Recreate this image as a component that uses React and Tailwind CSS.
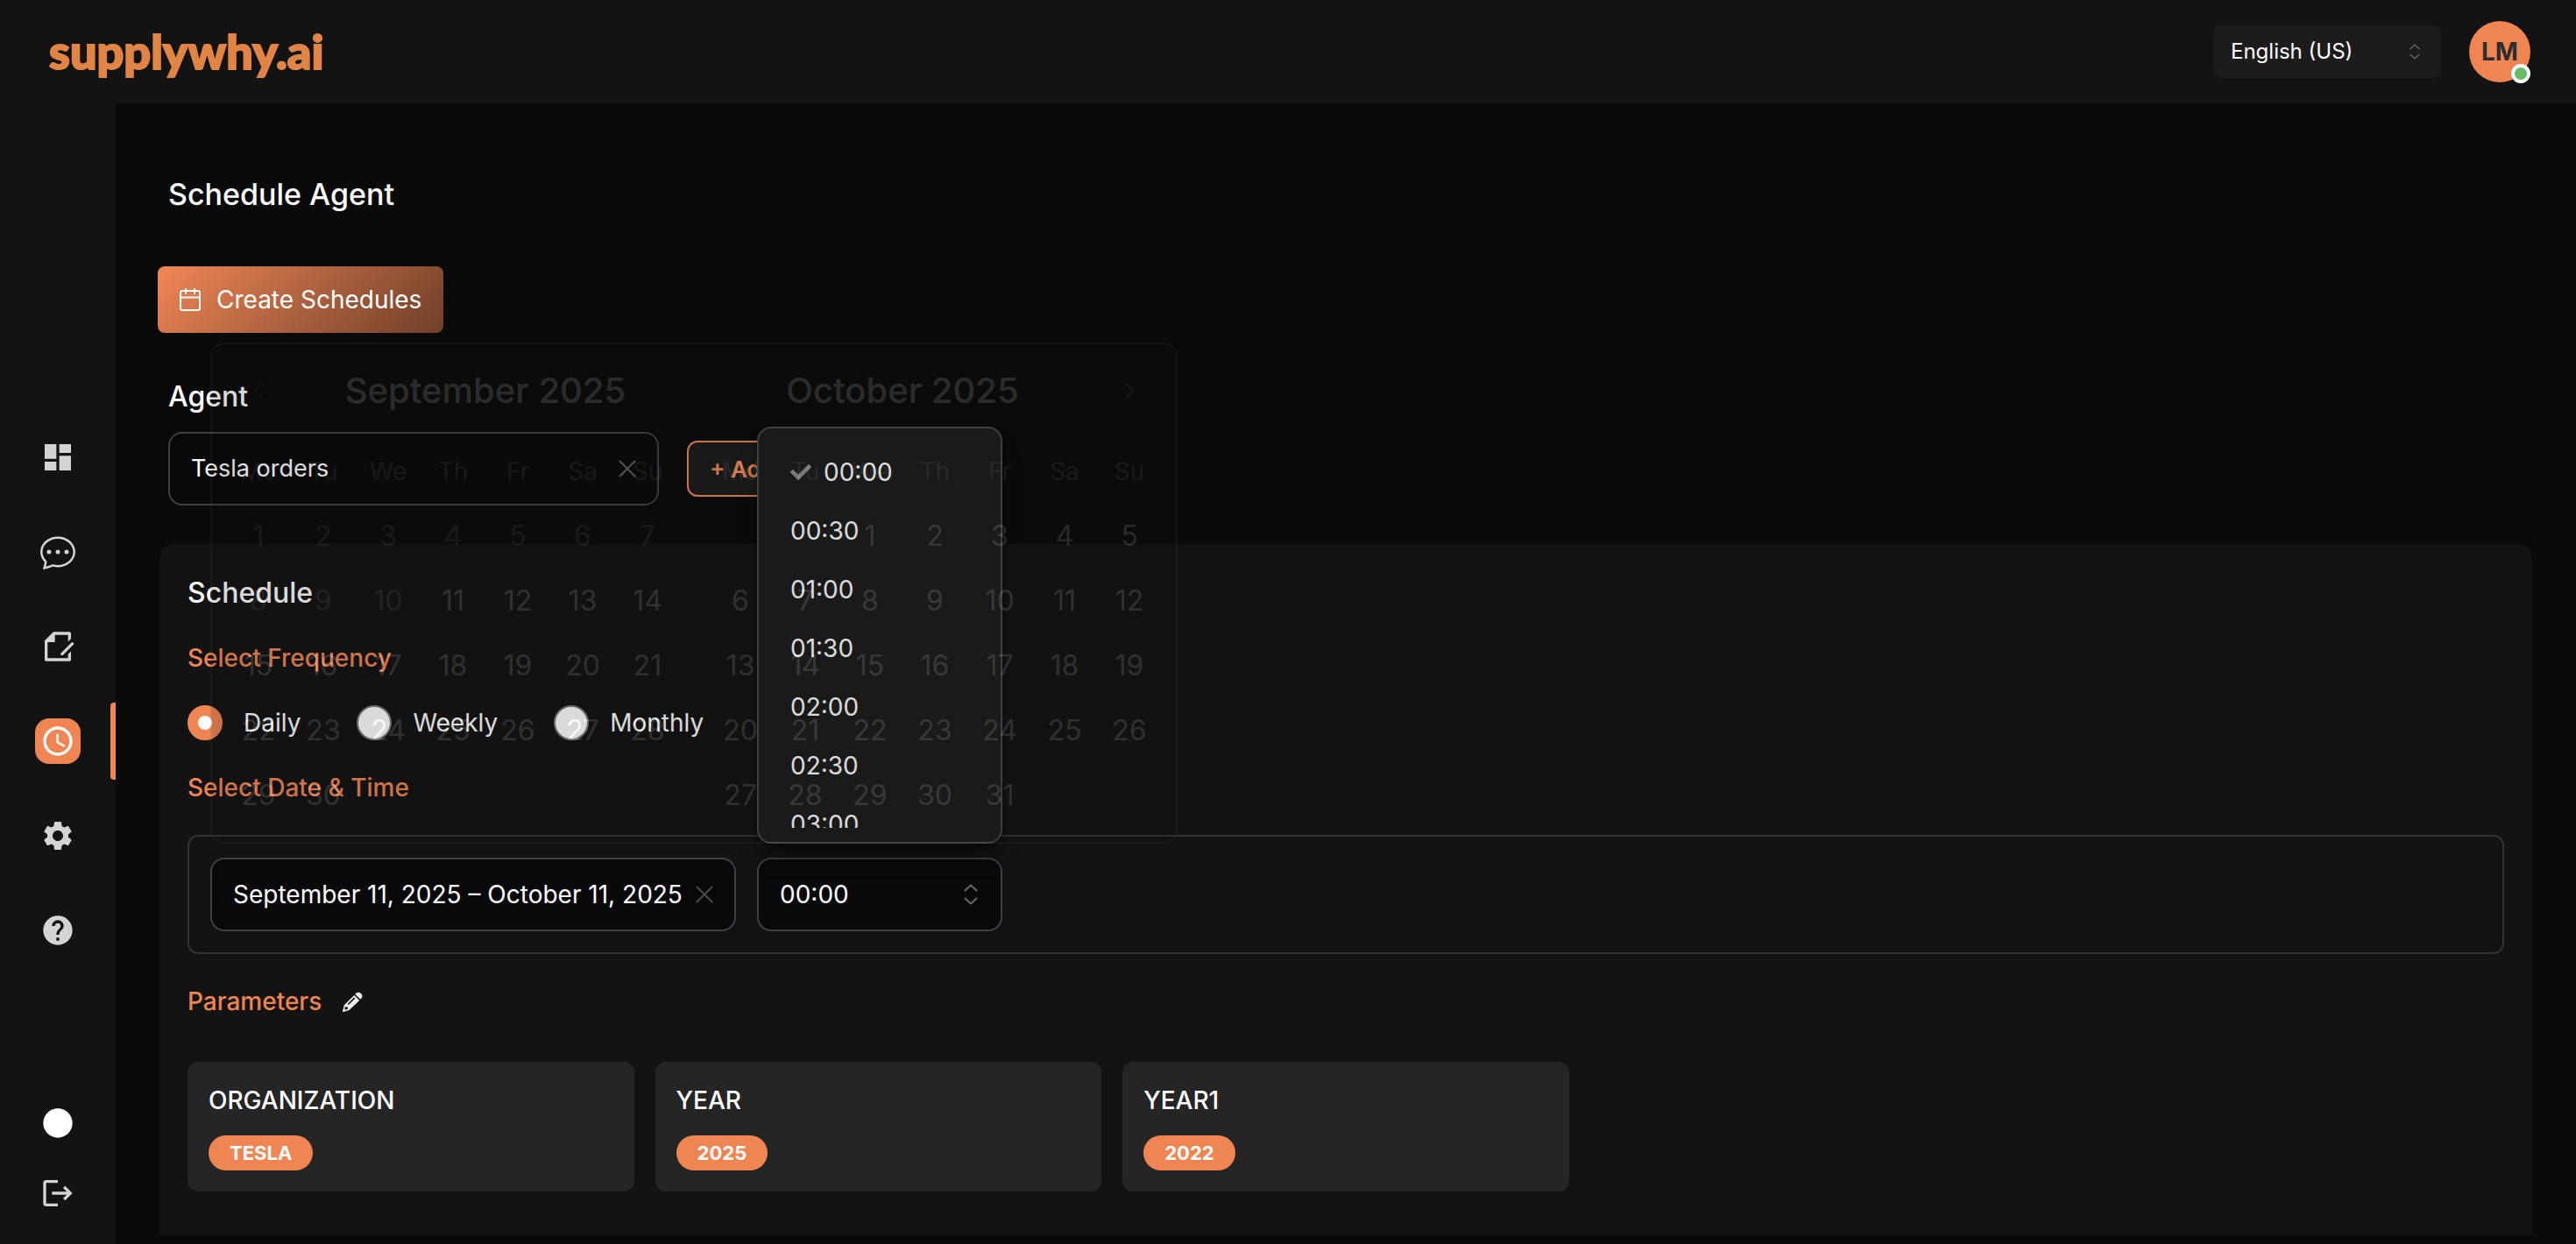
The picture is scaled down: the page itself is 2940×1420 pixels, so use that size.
import { useState } from "react";
import {
  MdDashboard,
  MdAccessTime,
  MdSettings,
  MdHelp,
  MdCircle,
  MdLogout,
} from "react-icons/md";
import { BsChatDots } from "react-icons/bs";
import { RiFileEditLine } from "react-icons/ri";
import { FaCheck } from "react-icons/fa";

const navItems = [
  { label: "Dashboard", Icon: MdDashboard },
  { label: "Chat", Icon: BsChatDots },
  { label: "Documents", Icon: RiFileEditLine },
  { label: "Schedule", Icon: MdAccessTime, active: true },
  { label: "Settings", Icon: MdSettings },
  { label: "Help", Icon: MdHelp },
];

const footerItems = [
  { label: "Theme", Icon: MdCircle, color: "text-white" },
  { label: "Log out", Icon: MdLogout, color: "text-[#d4d4d4]" },
];

const times = ["00:00", "00:30", "01:00", "01:30", "02:00", "02:30", "03:00"];
const weekdays = ["Mo", "Tu", "We", "Th", "Fr", "Sa", "Su"];
const frequencies = ["Daily", "Weekly", "Monthly"];
const parameters = [
  { name: "ORGANIZATION", value: "TESLA" },
  { name: "YEAR", value: "2025" },
  { name: "YEAR1", value: "2022" },
];

function buildWeeks(offset, days) {
  const cells = [
    ...Array(offset).fill(null),
    ...Array.from({ length: days }, (_, i) => i + 1),
  ];
  while (cells.length % 7) cells.push(null);
  const weeks = [];
  for (let i = 0; i < cells.length; i += 7) weeks.push(cells.slice(i, i + 7));
  return weeks;
}

function CrossIcon() {
  return (
    <svg viewBox="0 0 20 20" className="h-5 w-5" fill="none" stroke="currentColor" strokeWidth="2" strokeLinecap="round">
      <path d="M1.5 1.5l17 17M18.5 1.5l-17 17" />
    </svg>
  );
}

function UpDownIcon({ className }) {
  return (
    <svg viewBox="0 0 16 24" className={className} fill="none" stroke="currentColor" strokeWidth="2" strokeLinecap="round" strokeLinejoin="round">
      <path d="M1.5 7.5L8 1.5l6.5 6M1.5 16.5l6.5 6 6.5-6" />
    </svg>
  );
}

function CalendarIcon() {
  return (
    <svg viewBox="0 0 24 26" className="h-[26px] w-6" fill="none" stroke="currentColor" strokeWidth="2" strokeLinecap="round" strokeLinejoin="round">
      <rect x="1" y="3" width="22" height="22" rx="2" />
      <path d="M1 10.5h22M7 1v5M17 1v5" />
    </svg>
  );
}

function PencilIcon() {
  return (
    <svg viewBox="0 0 24 24" className="h-6 w-6" fill="currentColor">
      <path d="M15.8 2.3a4.400 4.400 0 0 1 6 5.900l-1.600 1.500l-5.800-5.800z" />
      <path fillRule="evenodd" d="M13.300 5l5.900 5.900L7.600 22L1 24a.8.8 0 0 1-1-1L1.800 16.300zM14.300 8.700l-1.200-1.200l-7.400 7.400l1.200 1.200zM2.700 18.500l-.4 2.200l1.700 1.100l2.300-1.500l-.9-2z" />
    </svg>
  );
}

function MonthArrow({ label, path, color }) {
  return (
    <button type="button" aria-label={label} className={`flex h-[74px] w-[74px] items-center justify-center ${color}`}>
      <svg viewBox="0 0 12 20" className="h-5 w-3" fill="none" stroke="currentColor" strokeWidth="2" strokeLinecap="round">
        <path d={path} />
      </svg>
    </button>
  );
}

function Month({ title, offset, days, firstAvailable, before, after }) {
  return (
    <section className="w-[518px]">
      <div className="flex h-[74px] items-center">
        {before}
        <h3 className="flex-1 text-center text-[40px] font-medium leading-[70px] text-[#e4e4e7]">{title}</h3>
        {after}
      </div>
      <table className="mt-[18px] w-full table-fixed border-collapse">
        <thead>
          <tr>
            {weekdays.map((d) => (
              <th key={d} scope="col" className="h-[74px] p-0 text-center text-[28px] font-normal text-[#71717a]">
                {d}
              </th>
            ))}
          </tr>
        </thead>
        <tbody>
          {buildWeeks(offset, days).map((week, i) => (
            <tr key={i}>
              {week.map((day, j) => (
                <td key={j} className="h-[74px] p-0 text-center">
                  {day && (
                    <button
                      type="button"
                      disabled={day < firstAvailable}
                      className="h-[74px] w-full text-[32px] text-[#d4d4d8] disabled:text-[#71717a]"
                    >
                      {day}
                    </button>
                  )}
                </td>
              ))}
            </tr>
          ))}
        </tbody>
      </table>
    </section>
  );
}

function CalendarPopover() {
  return (
    <div className="absolute bottom-full left-0 z-20 mb-4 w-max rounded-2xl border-2 border-[#52525b] bg-[#121212] p-4 opacity-15">
      <div className="flex gap-8">
        <Month
          title="September 2025"
          offset={0}
          days={30}
          firstAvailable={11}
          before={<MonthArrow label="Previous month" path="M10.5 1l-9 9 9 9" color="text-[#3f3f46]" />}
        />
        <Month
          title="October 2025"
          offset={2}
          days={31}
          firstAvailable={1}
          after={<MonthArrow label="Next month" path="M1.5 1l9 9-9 9" color="text-[#71717a]" />}
        />
      </div>
    </div>
  );
}

function TimeMenu({ value, onSelect }) {
  return (
    <div className="absolute bottom-full left-0 z-10 mb-4 w-full rounded-2xl border-2 border-[#46464d] bg-[#1c1c1c] py-4 shadow-xl shadow-black/40">
      <ul role="listbox" aria-label="Time" className="h-[440px] overflow-hidden">
        {times.map((t) => (
          <li
            key={t}
            role="option"
            aria-selected={t === value}
            onClick={() => onSelect(t)}
            className="flex h-[67px] cursor-pointer items-center gap-3.5 px-9 text-[28px] text-white"
          >
            {t === value && <FaCheck className="h-6 w-6 text-[#8a8a8a]" />}
            {t}
          </li>
        ))}
      </ul>
    </div>
  );
}

export default function App() {
  const [time, setTime] = useState("00:00");
  const [frequency, setFrequency] = useState("Daily");

  return (
    <div className="flex min-h-screen flex-col bg-[#0a0a0a] font-[Inter,sans-serif] text-white">
      <header className="flex h-[118px] items-center justify-between bg-[#131313] pl-14 pr-[52px]">
        <a href="#" className="font-[Lato,sans-serif] text-[54px] font-black leading-none text-[#e08545] [-webkit-text-stroke:2px_#e08545]">
          supplywhy.ai
        </a>
        <div className="flex items-center gap-8">
          <div className="relative">
            <select aria-label="Language" className="h-[60px] w-[260px] appearance-none rounded-lg bg-[#1c1c1c] px-5 text-2xl text-white">
              <option>English (US)</option>
            </select>
            <UpDownIcon className="pointer-events-none absolute right-6 top-5 h-5 w-3 text-[#5c5c5c]" />
          </div>
          <button type="button" aria-label="Account" className="relative flex h-[70px] w-[70px] items-center justify-center rounded-full bg-[#ef8553] text-[28px] font-bold text-[#2d2d2d]">
            LM
            <span className="absolute -bottom-px right-0 h-[22px] w-[22px] rounded-full border-4 border-white bg-[#66bb66]" />
          </button>
        </div>
      </header>

      <div className="flex flex-1">
        <aside className="flex w-[132px] shrink-0 flex-col justify-between bg-[#131313] pb-[18px] pt-[350px]">
          <nav aria-label="Main" className="flex flex-col">
            {navItems.map(({ label, Icon, active }) => (
              <a
                key={label}
                href="#"
                aria-label={label}
                aria-current={active ? "page" : undefined}
                className="relative flex h-[108px] items-center justify-center"
              >
                {active ? (
                  <>
                    <span className="flex h-[52px] w-[52px] items-center justify-center rounded-2xl bg-[#ef8553]">
                      <Icon className="h-10 w-10 text-white" />
                    </span>
                    <span className="absolute right-0 h-[88px] w-1.5 rounded-l bg-[#ef8553]" />
                  </>
                ) : (
                  <Icon className="h-10 w-10 text-[#d4d4d4]" />
                )}
              </a>
            ))}
          </nav>
          <div className="flex flex-col">
            {footerItems.map(({ label, Icon, color }) => (
              <button key={label} type="button" aria-label={label} className="flex h-20 items-center justify-center">
                <Icon className={`h-10 w-10 ${color}`} />
              </button>
            ))}
          </div>
        </aside>

        <main className="min-w-0 flex-1 pb-2 pl-12 pr-[50px] pt-[84px]">
          <h1 className="pl-3 text-[34px] font-medium leading-10">Schedule Agent</h1>

          <button type="button" className="mt-[62px] flex h-[76px] items-center gap-[18px] rounded-lg bg-linear-135 from-[#f28756] to-[#704029] px-[25px] text-[28px]">
            <CalendarIcon />
            Create Schedules
          </button>

          <div className="mt-[53px] pl-3">
            <label htmlFor="agent" className="block text-[32px] font-medium leading-10">
              Agent
            </label>
            <div className="mt-5 flex items-center gap-8">
              <div className="flex h-[84px] w-[560px] items-center rounded-2xl border-2 border-[#3f3f46] bg-[#09090b] px-6">
                <input id="agent" defaultValue="Tesla orders" className="min-w-0 flex-1 bg-transparent text-[27px] outline-none" />
                <button type="button" aria-label="Clear agent" className="text-[#5f5f66]">
                  <CrossIcon />
                </button>
              </div>
              <button type="button" className="h-16 rounded-xl border-2 border-[#ef8553] bg-[#1b1b1b] px-6 text-[26px] font-semibold text-[#ef8553]">
                + Add
              </button>
            </div>
          </div>

          <section className="ml-0.5 mt-11 rounded-t-2xl bg-[#131313] px-8 pb-[50px] pt-9">
            <h2 className="text-[32px] font-medium leading-10">Schedule</h2>

            <fieldset className="mt-[34px]">
              <legend className="text-[28px] font-medium leading-10 text-[#ef8553]">Select Frequency</legend>
              <div className="mt-[34px] flex gap-16">
                {frequencies.map((f) => (
                  <label key={f} className="flex h-10 items-center gap-6 text-[28px]">
                    <input
                      type="radio"
                      name="frequency"
                      checked={frequency === f}
                      onChange={() => setFrequency(f)}
                      className="h-10 w-10 appearance-none rounded-full border-2 border-[#767676] bg-white checked:border-[12px] checked:border-[#ef8553]"
                    />
                    {f}
                  </label>
                ))}
              </div>
            </fieldset>

            <h3 className="mt-[34px] text-[28px] font-medium leading-10 text-[#ef8553]">Select Date &amp; Time</h3>
            <div className="mt-[34px] flex gap-6 rounded-xl border-2 border-[#333333] p-6">
              <div className="relative w-[600px]">
                <div className="flex h-[84px] items-center rounded-2xl border-2 border-[#3f3f46] bg-[#09090b] px-6">
                  <input
                    aria-label="Date range"
                    defaultValue="September 11, 2025 – October 11, 2025"
                    className="min-w-0 flex-1 bg-transparent text-[28px] outline-none"
                  />
                  <button type="button" aria-label="Clear dates" className="text-[#4a4a4f]">
                    <CrossIcon />
                  </button>
                </div>
                <CalendarPopover />
              </div>
              <div className="relative w-[280px]">
                <select
                  aria-label="Time"
                  value={time}
                  onChange={(e) => setTime(e.target.value)}
                  className="h-[84px] w-full appearance-none rounded-2xl border-2 border-[#3f3f46] bg-[#09090b] px-6 text-[28px] text-white"
                >
                  {times.map((t) => (
                    <option key={t}>{t}</option>
                  ))}
                </select>
                <UpDownIcon className="pointer-events-none absolute right-7 top-[30px] h-6 w-4 text-[#66666d]" />
                <TimeMenu value={time} onSelect={setTime} />
              </div>
            </div>

            <div className="mt-[34px] flex items-center gap-6">
              <h3 className="text-[28px] font-medium leading-10 text-[#ef8553]">Parameters</h3>
              <button type="button" aria-label="Edit parameters" className="text-[#ececec]">
                <PencilIcon />
              </button>
            </div>
            <div className="mt-[49px] grid grid-cols-5 gap-6">
              {parameters.map((p) => (
                <article key={p.name} className="flex flex-col items-start gap-5 rounded-xl bg-[#252525] p-6">
                  <h4 className="text-[28px] font-medium leading-10">{p.name}</h4>
                  <span className="flex h-10 items-center rounded-full bg-[#ef8553] px-6 text-[22px] font-bold">{p.value}</span>
                </article>
              ))}
            </div>
          </section>
        </main>
      </div>
    </div>
  );
}
